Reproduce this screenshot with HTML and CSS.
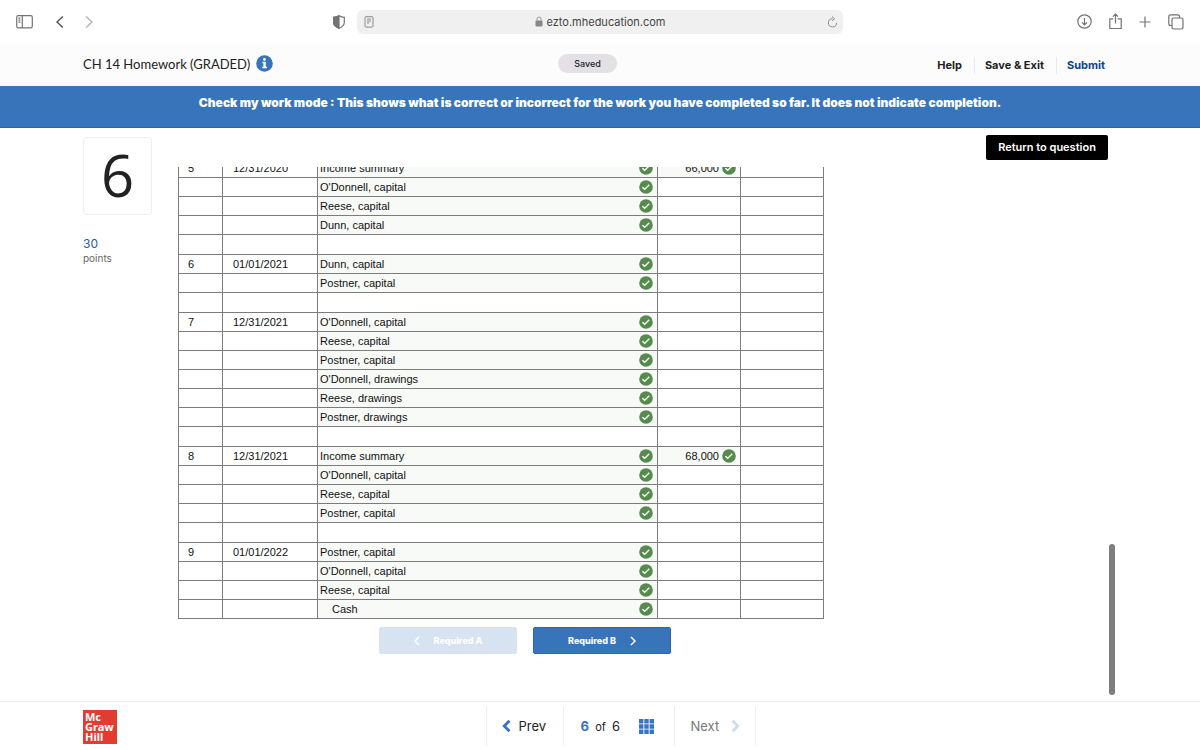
FILE: index.html
```html
<!DOCTYPE html>
<html lang="en">
<head>
<meta charset="utf-8">
<title>CH 14 Homework (GRADED)</title>
<link rel="stylesheet" href="styles.css">
</head>
<body>
<svg class="defs" aria-hidden="true">
  <symbol id="check" viewBox="0 0 14 14"><circle cx="7" cy="7" r="6.8" fill="#568b4e"/><path d="M3.400 7.200l2.300 2 4.600-4.500" fill="none" stroke="#fff" stroke-width="1.400"/></symbol>
</svg>

<div class="browser">
  <div class="browser-side">
    <button class="tool" aria-label="Sidebar"><svg width="17" height="14" viewBox="0 0 17 14"><rect x=".7" y=".7" width="15.6" height="12.2" rx="1.6"/><path d="M6.3 1v12M2.4 3.2h2M2.4 5.2h2M2.4 7.2h2"/></svg></button>
    <button class="tool back" aria-label="Back"><svg width="8" height="14" viewBox="0 0 8 14"><path class="strong" d="M6.8 1.5L1 7l5.800 5.500"/></svg></button>
    <button class="tool forward" aria-label="Forward"><svg width="8" height="14" viewBox="0 0 8 14"><path class="faint" d="M1.200 1.500L7 7l-5.800 5.500"/></svg></button>
    <button class="tool shield" aria-label="Privacy report"><svg width="12" height="14" viewBox="0 0 12 14"><path d="M6 .7C4.500 1.700 2.700 2.200.7 2.300V7.500c0 2.700 2.400 4.600 5.300 5.800 2.900-1.200 5.300-3.100 5.300-5.800V2.300C9.300 2.200 7.500 1.700 6 .7z"/><path class="solid" d="M6 .7C4.500 1.700 2.700 2.200.7 2.300V7.500c0 2.700 2.400 4.600 5.300 5.800z"/></svg></button>
  </div>
  <div class="address">
    <button class="tool light" aria-label="Reader"><svg width="10" height="12" viewBox="0 0 10 12"><rect x="1" y=".7" width="8" height="10.400" rx="1"/><path d="M3 3h4M3 5h4M3 7h2"/></svg></button>
    <div class="url">
      <svg width="8" height="11" viewBox="0 0 8 11"><rect x=".5" y="4.500" width="7" height="6" rx="1" fill="#888"/><path d="M2 5V3a2 2 0 0 1 4 0v2" fill="none" stroke="#999"/></svg>
      <input type="text" value="ezto.mheducation.com" aria-label="Address">
    </div>
    <button class="tool light" aria-label="Reload"><svg width="11" height="12" viewBox="0 0 11 12"><path d="M5.500 2.700A4.100 4.100 0 1 0 9.600 6.800M5 .5l2.500 2.200L5 4.900"/></svg></button>
  </div>
  <div class="browser-side end">
    <button class="tool" aria-label="Downloads"><svg width="15" height="15" viewBox="0 0 15 15"><circle cx="7.500" cy="7.500" r="6.700"/><path d="M7.500 4v7M4.900 8.300l2.600 2.700 2.600-2.700"/></svg></button>
    <button class="tool" aria-label="Share"><svg width="13" height="17" viewBox="0 0 13 17"><path d="M4.300 5.800H.8v9.700h11.400V5.800H8.700M6.500 10.500V1.200M3.900 3.700l2.600-2.600 2.600 2.600"/></svg></button>
    <button class="tool" aria-label="New tab"><svg width="12" height="12" viewBox="0 0 12 12"><path d="M6 .5v11M.5 6h11"/></svg></button>
    <button class="tool" aria-label="Tabs"><svg width="16" height="16" viewBox="0 0 16 16"><path d="M4 11.500H2.500a1.700 1.700 0 0 1-1.700-1.700V2.500A1.700 1.700 0 0 1 2.500.8h7.300a1.700 1.700 0 0 1 1.700 1.700V4"/><rect x="4" y="4" width="11" height="11" rx="1.700"/></svg></button>
  </div>
</div>

<header class="header">
  <h1 class="title">CH 14 Homework (GRADED)
    <button class="info" aria-label="Information"><svg width="17" height="17" viewBox="0 0 17 17"><circle cx="8.500" cy="8.500" r="8.300" fill="#3874b9"/><circle cx="8.400" cy="4.400" r="1.400" fill="#fff"/><path d="M6.400 6.700h3.400v5.100h1.200v1.500H6.200v-1.500h1.200V8.200h-1z" fill="#fff"/></svg></button>
  </h1>
  <span class="saved">Saved</span>
  <nav class="links">
    <a href="#help">Help</a>
    <a href="#exit">Save &amp; Exit</a>
    <a href="#submit" class="submit">Submit</a>
  </nav>
</header>

<p class="banner">Check my work mode : This shows what is correct or incorrect for the work you have completed so far. It does not indicate completion.</p>

<main class="main">
  <aside class="question">
    <div class="number">6</div>
    <div class="score">30</div>
    <div class="points">points</div>
  </aside>
  <section class="pane">
    <table class="journal">
      <colgroup><col class="c-no"><col class="c-date"><col class="c-account"><col class="c-amount"><col class="c-amount"></colgroup>
      <tbody id="rows"></tbody>
    </table>
    <div class="steps">
      <button class="step" disabled><svg width="6" height="10" viewBox="0 0 6 10"><path d="M5 1L1 5l4 4"/></svg>Required A</button>
      <button class="step">Required B<svg width="6" height="10" viewBox="0 0 6 10"><path d="M1 1l4 4-4 4"/></svg></button>
    </div>
  </section>
  <button class="return">Return to question</button>
  <div class="thumb"></div>
</main>

<footer class="footer">
  <div class="logo">Mc<br>Graw<br>Hill</div>
  <nav class="pager">
    <button class="cell prev"><svg width="9" height="14" viewBox="0 0 9 14"><path d="M7.500 1.700L2.200 7l5.300 5.300"/></svg>Prev</button>
    <div class="cell count"><span><b>6</b>&nbsp; of &nbsp;<span class="total">6</span></span>
      <button class="grid" aria-label="Question list"><svg width="15" height="15" viewBox="0 0 15 15"><path d="M0 2.200h15M0 7.500h15M0 12.800h15" stroke="#3874c4" stroke-width="4.400" stroke-dasharray="4.400 .9"/></svg></button>
    </div>
    <button class="cell next" disabled>Next<svg width="9" height="14" viewBox="0 0 9 14"><path d="M1.500 1.700L6.800 7l-5.300 5.300"/></svg></button>
  </nav>
</footer>
<script src="rows.js"></script>
</body>
</html>
```
FILE: rows.js
```js
const entries = [
  ["5", "12/31/2020", ["Income summary", "O'Donnell, capital", "Reese, capital", "Dunn, capital"], "66,000"],
  ["6", "01/01/2021", ["Dunn, capital", "Postner, capital"]],
  ["7", "12/31/2021", ["O'Donnell, capital", "Reese, capital", "Postner, capital", "O'Donnell, drawings", "Reese, drawings", "Postner, drawings"]],
  ["8", "12/31/2021", ["Income summary", "O'Donnell, capital", "Reese, capital", "Postner, capital"], "68,000"],
  ["9", "01/01/2022", ["Postner, capital", "O'Donnell, capital", "Reese, capital", "Cash"]]
];
const filled = (text, kind) =>
  `<td class="${kind}"><div class="value"><span>${text}</span><svg class="check"><use href="#check"/></svg></div></td>`;
const html = entries.map(([no, date, accounts, amount]) =>
  accounts.map((name, i) =>
    `<tr><td class="no">${i ? "" : no}</td><td class="date">${i ? "" : date}</td>` +
    filled(name, name === "Cash" ? "account indent" : "account") +
    (amount && !i ? filled(amount, "amount") : "<td></td>") + "<td></td></tr>"
  ).join("")
).join('<tr class="blank"><td></td><td></td><td></td><td></td><td></td></tr>');
document.getElementById("rows").innerHTML = html;
```
FILE: styles.css
```css
* { box-sizing: border-box; }
body {
  margin: 0;
  height: 100vh;
  display: flex;
  flex-direction: column;
  overflow: hidden;
  background: #fff;
  color: #222;
  font-family: Inter, "Liberation Sans", sans-serif;
  font-size: 12px;
}
button { font: inherit; color: inherit; background: none; border: 0; padding: 0; }
svg { display: block; flex: none; }
.defs { position: absolute; width: 0; height: 0; }

.browser {
  flex: none;
  display: grid;
  grid-template-columns: 1fr 486px 1fr;
  gap: 12px;
  align-items: center;
  height: 43px;
  padding: 0 16px;
}
.browser-side { display: flex; align-items: center; }
.end { justify-content: flex-end; gap: 17px; }
.tool svg { fill: none; stroke: #737373; stroke-width: 1.2; }
.light svg { stroke: #8a8a8a; stroke-width: 1; }
.tool .strong { stroke: #555; stroke-width: 1.5; }
.tool .faint { stroke: #b5b5b5; stroke-width: 1.5; }
.tool .solid { fill: #737373; }
.back { margin-left: 23px; }
.forward { margin-left: 21px; }
.shield { margin-left: auto; }
.address {
  display: flex;
  align-items: center;
  justify-content: space-between;
  height: 24px;
  padding: 0 5px 0 7px;
  border-radius: 6px;
  background: #f0f0f0;
}
.url { display: flex; align-items: center; gap: 4px; }
.url input {
  width: 120px;
  padding: 0;
  border: 0;
  background: none;
  color: #444;
  font: 11px Inter, sans-serif;
}

.header {
  flex: none;
  display: grid;
  grid-template-columns: 1fr auto 1fr;
  align-items: center;
  height: 43px;
  padding: 0 95px 2px 83px;
  background: #fcfcfc;
}
.title {
  display: flex;
  align-items: center;
  gap: 6px;
  margin: 0;
  font-family: Lato, sans-serif;
  font-size: 13px;
  font-weight: 400;
}
.saved {
  margin-right: 13px;
  padding: 0 16px;
  border-radius: 10px;
  background: #e4e1e6;
  font-size: 9px;
  font-weight: 500;
  line-height: 19px;
}
.links { display: flex; justify-content: flex-end; padding-top: 3px; font-size: 11px; font-weight: 700; line-height: 17px; }
.links a { padding-left: 10px; margin-left: 12px; border-left: 1px solid #eaeaea; color: #222; text-decoration: none; }
.links a:first-child { border-left: 0; }
.links .submit { color: #0b418c; }

.banner {
  flex: none;
  height: 42px;
  margin: 0;
  padding: 9px 12px;
  border-bottom: 1px solid #2a62ab;
  background: #3874b9;
  color: #fff;
  font-size: 12px;
  font-weight: 900;
  line-height: 15px;
  text-align: center;
}

.main {
  position: relative;
  flex: 1;
  min-height: 0;
  display: flex;
  padding: 0 92px 0 83px;
}
.question { flex: none; width: 69px; padding-top: 9px; }
.number {
  height: 78px;
  border: 1px solid #eee;
  border-radius: 4px;
  font-family: "Open Sans", sans-serif;
  font-size: 58px;
  font-weight: 500;
  line-height: 74px;
  text-align: center;
}
.score { margin-top: 21px; color: #2a5b9d; font-size: 12px; line-height: 15px; }
.points { color: #666; font-size: 10px; line-height: 14px; }
.pane {
  display: flex;
  flex-direction: column;
  justify-content: flex-end;
  width: 694px;
  margin: 39px auto 0 26px;
  padding-bottom: 47px;
  overflow: hidden;
}
.journal {
  flex: none;
  width: 646px;
  border-collapse: collapse;
  table-layout: fixed;
  color: #111;
  font-family: "Liberation Sans", Arial, sans-serif;
  font-size: 11px;
  line-height: 15px;
}
.c-no { width: 44px; }
.c-date { width: 95px; }
.c-account { width: 340px; }
.journal tr { height: 19px; }
.journal .blank { height: 20px; }
.journal td { padding: 0 4px 0 2px; border: 1px solid #7c7c7c; }
.journal .no { padding-left: 9px; }
.journal .date { padding-left: 10px; }
.account, .amount { background: #f7faf7; }
.value { display: flex; justify-content: space-between; align-items: center; }
.amount .value { justify-content: flex-end; gap: 3px; }
.journal .indent { padding-left: 14px; }
.check { width: 14px; height: 14px; }
.steps { flex: none; display: flex; justify-content: center; gap: 16px; margin-top: 8px; }
.step {
  display: flex;
  align-items: center;
  justify-content: center;
  gap: 14px;
  width: 138px;
  height: 27px;
  border: 1px solid #2c66ae;
  border-radius: 2px;
  background: #3874b9;
  color: #fff;
  font-size: 9px;
  font-weight: 800;
}
.step:disabled { border-color: #d7e3f1; background: #d7e3f1; }
.step svg { fill: none; stroke: currentColor; stroke-width: 1.5; }
.return {
  flex: none;
  width: 122px;
  height: 25px;
  margin-top: 7px;
  padding-bottom: 2px;
  border-radius: 2px;
  background: #000;
  color: #fff;
  font-size: 11px;
  font-weight: 600;
}
.thumb {
  position: absolute;
  right: 85px;
  bottom: 6px;
  width: 6px;
  height: 151px;
  border-radius: 3px;
  background: #7e7e7e;
}

.footer {
  flex: none;
  display: flex;
  align-items: flex-start;
  height: 49px;
  padding: 0 76px 0 83px;
  border-top: 1px solid #eee;
}
.logo {
  width: 34px;
  height: 34px;
  margin-top: 8px;
  padding: 2px;
  background: #e23b30;
  color: #fff;
  font-family: "Noto Sans", sans-serif;
  font-size: 11px;
  font-weight: 700;
  line-height: 10px;
}
.pager { display: flex; margin: 4px auto 0; border-right: 1px solid #eee; font-size: 13px; }
.cell { display: flex; align-items: center; height: 40px; border-left: 1px solid #eee; }
.cell svg { fill: none; stroke: #3874c4; stroke-width: 2.800; }
.prev { width: 77px; padding-left: 15px; gap: 8px; }
.count { width: 111px; padding-left: 17px; gap: 19px; font-size: 11px; }
.count b { color: #3874c4; font-size: 13px; }
.total { font-size: 13px; }
.next { width: 81px; padding-left: 16px; gap: 12px; color: #777; }
.next svg { stroke: #ccdcf2; }
```
